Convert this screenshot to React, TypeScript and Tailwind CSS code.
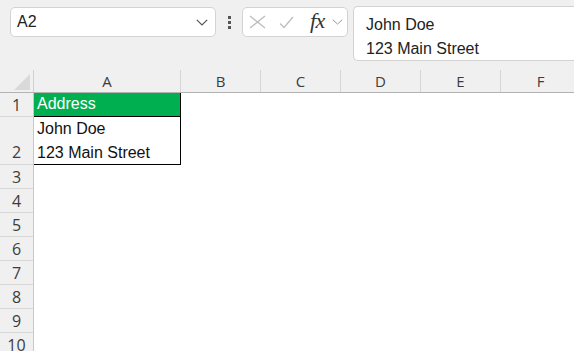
import React from "react";

const cols = ["B", "C", "D", "E", "F"];
const rowsAfter = [3, 4, 5, 6, 7, 8, 9, 10];

export default function App() {
  return (
    <div className="w-[574px] h-[351px] overflow-hidden bg-[#f0f0f0] flex flex-col font-['Liberation_Sans',Arial,sans-serif]">
      {/* Formula bar */}
      <div className="h-[70px] flex items-start pl-[10px] shrink-0">
        <div className="mt-[7px] w-[206px] h-[30px] shrink-0 bg-white border border-[#d3d3d3] rounded-[5px] flex items-center justify-between pl-[6px] pr-[7px]">
          <span className="text-[16px] text-[#222]">A2</span>
          <svg width="12" height="7" viewBox="0 0 12 7" fill="none">
            <path d="M0.8 0.8 L6 6 L11.2 0.8" stroke="#555" strokeWidth="1.2" />
          </svg>
        </div>
        <div className="w-[26px] h-[44px] shrink-0 flex flex-col items-center justify-start pt-[16px] gap-[2px]">
          <div className="w-[3px] h-[3px] bg-[#555]" />
          <div className="w-[3px] h-[3px] bg-[#555]" />
          <div className="w-[3px] h-[3px] bg-[#555]" />
        </div>
        <div className="mt-[7px] w-[106px] h-[30px] shrink-0 bg-white border border-[#d3d3d3] rounded-[5px] flex items-center pl-[6px]">
          <svg width="17" height="14" viewBox="0 0 17 14" fill="none">
            <path d="M1 1 L16 13 M16 1 L1 13" stroke="#bdbdbd" strokeWidth="1.3" />
          </svg>
          <svg className="ml-[13px]" width="15" height="13" viewBox="0 0 15 13" fill="none">
            <path d="M1 7.5 L5 11.5 L14 1" stroke="#bdbdbd" strokeWidth="1.3" />
          </svg>
          <span className="ml-[16px] text-[22px] leading-none text-[#333] italic font-['Liberation_Serif',serif] tracking-[-0.5px] -mt-[2px]">fx</span>
          <svg className="ml-[7px]" width="11" height="6" viewBox="0 0 11 6" fill="none">
            <path d="M0.8 0.8 L5.5 5 L10.2 0.8" stroke="#9a9a9a" strokeWidth="1" />
          </svg>
        </div>
        <div className="ml-[5px] mt-[6px] flex-1 h-[55px] bg-white border border-[#d3d3d3] border-r-0 rounded-l-[5px] pl-[12px] pt-[6px] text-[16px] leading-[24px] text-[#222]">
          <div>John Doe</div>
          <div>123 Main Street</div>
        </div>
      </div>

      {/* Column headers */}
      <div className="h-[23px] flex shrink-0 border-b border-[#b3b3b3] text-[15px] text-[#3c3c3c] font-['Open_Sans',sans-serif]">
        <div className="w-[34px] shrink-0 border-r border-[#d0d0d0] relative">
          <svg className="absolute left-[14px] top-[4px]" width="16" height="16" viewBox="0 0 16 16">
            <path d="M16 0 L16 16 L0 16 Z" fill="#d9d9d9" />
          </svg>
        </div>
        <div className="w-[147px] shrink-0 border-r border-[#d6d6d6] flex items-center justify-center">A</div>
        {cols.map((c) => (
          <div key={c} className="w-[80px] shrink-0 border-r border-[#d6d6d6] flex items-center justify-center">
            {c}
          </div>
        ))}
      </div>

      {/* Grid */}
      <div className="flex-1 flex bg-white">
        <div className="w-[34px] bg-[#f0f0f0] border-r border-[#c8c8c8] flex flex-col text-[16px] text-[#3c3c3c] font-['Open_Sans',sans-serif] shrink-0">
          <div className="h-[24px] shrink-0 border-b border-[#d8d8d8] flex items-center justify-center">1</div>
          <div className="h-[48px] shrink-0 border-b border-[#d8d8d8] flex items-end justify-center">2</div>
          {rowsAfter.map((r) => (
            <div key={r} className="h-[24px] shrink-0 border-b border-[#d8d8d8] flex items-center justify-center">
              {r}
            </div>
          ))}
        </div>
        <div className="flex flex-col self-start">
          <div className="w-[147px] h-[24px] bg-[#00b050] border-r border-b border-black text-white text-[16px] pl-[3px] leading-[22px]">
            Address
          </div>
          <div className="w-[147px] h-[48px] border-r border-b border-black text-[#111] text-[16px] pl-[3px] leading-[24px]">
            <div>John Doe</div>
            <div>123 Main Street</div>
          </div>
        </div>
      </div>
    </div>
  );
}
